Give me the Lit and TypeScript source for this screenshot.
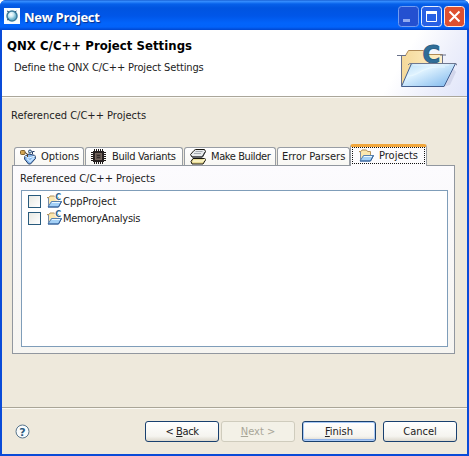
import { LitElement, html, css, svg } from "lit";
import { customElement, property } from "lit/decorators.js";

const projectFolder = (letter: boolean) => svg`
  <path d="M2.500 12V4l-1.500-.5h2l1-1.500h4.500l1 1.500h3V8" fill="#fbe7ae" stroke="#b3935c"/>
  <path d="M2.500 4v8.500" stroke="#7a8da8" fill="none"/>
  <path d="M5.500 7.500h10L12.500 13h-10.500z" fill="#a3d0f6" stroke="#5680b0"/>
  <path d="M6 8.500h8" stroke="#eaf7ff"/>
  <path d="M2 13h10.500l3-5.500" stroke="#2f5c98" fill="none"/>
  ${letter ? svg`<text x="9.200" y="6" class="letter">C</text>` : ""}`;

const icons: Record<string, unknown> = {
  options: svg`
    <path d="M5 7l4-2 6 1.500.5 3-5 5.500h-2L4.500 10z" fill="#86b7ee" stroke="#1f3b68"/>
    <path d="M7 9.500l3 3 4-4" stroke="#c9e6ff" stroke-width="1.500" fill="none"/>
    <path d="M5 7l4 2 6-2" stroke="#e3f3ff" fill="none"/>
    <rect x=".5" y="1.500" width="4.500" height="4" rx="1" fill="#d3a552" stroke="#80612c"/>
    <path d="M5 3.500l2.500 1.500v3" fill="none" stroke="#574024"/>
    <circle cx="10" cy="2.500" r="1.500" fill="#c4dcec" stroke="#2b4a70"/>
    <path d="M12.500 5V2.500h2" fill="none" stroke="#243c68"/>`,
  chip: svg`
    <path d="M3.500 0v15M5.500 0v15M7.500 0v15M9.500 0v15M11.500 0v15M0 3.500h15M0 5.500h15M0 7.500h15M0 9.500h15M0 11.500h15" stroke="#201a18"/>
    <rect x="2" y="2" width="11" height="11" fill="#282221"/>
    <rect x="4.500" y="4.500" width="6" height="6" fill="#5b504b" stroke="#75655c"/>
    <path d="M6 6.500h3M6 8.500h3" stroke="#332b2b"/>`,
  make: svg`
    <path d="M1 12.500L3 9.500h12l.5 1.500L13 15H2z" fill="#e9dc96" stroke="#17150e"/>
    <path d="M3 12h9.500L15 10" fill="none" stroke="#fdf8cf" stroke-width="1.500"/>
    <path d="M.5 5.500L4 1.500l1.500-1h9l1 2-3 5.500H2z" fill="#e8eaeb" stroke="#17150e"/>
    <path d="M5.500 2.500h7M4 4.500h7" stroke="#a5abb0"/>
    <path d="M2 8h10l3-5" fill="none" stroke="#3d4348"/>`,
  folder: projectFolder(false),
  cfolder: projectFolder(true),
};

@customElement("xp-icon")
export class XpIcon extends LitElement {
  @property() name = "folder";
  static styles = css`
    :host { display: block; flex: none; width: 16px; height: 16px; }
    svg { display: block; overflow: visible; }
    .letter {
      font: bold 8px "DejaVu Sans", sans-serif; fill: #2f668f;
      stroke: #fff; stroke-width: 1.500px; paint-order: stroke;
    }
  `;
  render() {
    return html`<svg width="16" height="16" viewBox="0 0 16 16">${icons[this.name]}</svg>`;
  }
}

@customElement("app-root")
export class AppRoot extends LitElement {
  static styles = css`
    :host {
      display: block; width: 469px; height: 456px; overflow: hidden;
      font: 11px/14px "DejaVu Sans Condensed", "DejaVu Sans", sans-serif;
      color: #222; cursor: default;
    }
    * { box-sizing: border-box; }
    .window {
      display: flex; flex-direction: column; height: 456px;
      padding: 0 2px 2px; background: #0a4bd8; white-space: nowrap;
      border-radius: 6px 6px 0 0;
    }
    .title {
      display: flex; align-items: center; height: 30px; flex: none; margin: 0 -2px;
      padding: 3px 4px 0 4px; border-radius: 6px 6px 0 0;
      background: linear-gradient(#0c50c6 0, #3a90ff 1px, #2a83fa 2px, #0660ea 4px, #0054e0 8px, #0056e8 16px, #0264fb 23px, #0263fa 27px, #0046cf 30px);
    }
    .logo { display: block; width: 16px; height: 16px; margin-top: -1px; }
    .caption {
      flex: 1; margin-left: 4px; color: #fff; text-shadow: 1px 1px 1px #0a2f8a;
      font: bold 13px/18px "Open Sans", "Noto Sans", sans-serif; letter-spacing: -.3px;
    }
    .controls { display: flex; gap: 2px; }
    .controls svg { display: block; }
    .header {
      height: 67px; flex: none; display: flex; justify-content: space-between;
      border-bottom: 1px solid #aaa69a;
      background: linear-gradient(120deg, #fff 0, #fff 83%, #edeffb 92%, #e0e5fa 100%);
    }
    .heading { padding: 8px 0 0 5px; }
    h1 { margin: 0; font-size: 13px; line-height: 16px; letter-spacing: .04px; color: #000; }
    .sub { margin: 7px 0 0 7px; letter-spacing: -.13px; }
    .banner { margin: 8px 10px 0 0; display: block; }
    .mark { font: bold 24px "DejaVu Sans", sans-serif; fill: #2f6e99; stroke: #2a6188; }
    .body { flex: 1; background: #eee9dc; border-top: 1px solid #fbf9f3; padding: 11px 12px 0 10px; }
    .intro { margin-left: -1px; }
    .tabs { display: flex; align-items: flex-end; height: 21px; margin-top: 21px; padding-left: 2px; }
    .tab {
      display: flex; align-items: center; height: 18px; margin-right: 1px; padding: 1px 0 0 5px;
      border: 1px solid #989da4; border-bottom: 0; border-radius: 3px 3px 0 0;
      background: linear-gradient(#fff, #f8f7f3);
    }
    .tab xp-icon { margin-right: 5px; }
    .t1 { width: 70px; }
    .t2 { width: 98px; letter-spacing: -.33px; }
    .t3 { width: 92px; letter-spacing: -.4px; }
    .t4 { width: 73px; padding-left: 4px; margin-right: 0; }
    .t5 {
      width: 77px; height: 22px; margin-bottom: -1px; padding: 0 0 2px 7px; position: relative;
      border-top: 3px solid #f0a63c; background: #fcfbfd;
    }
    .t5::after { content: ""; position: absolute; inset: 0 1px 2px 1px; border: 1px dotted #111; }
    .panel {
      height: 189px; border: 1px solid #91979f; padding: 6px 6px 0 8px;
      background: linear-gradient(#fcfbfe, #f6f5f1);
    }
    .list { height: 157px; margin-top: 4px; border: 1px solid #7f9db9; background: #fff; padding: 2px 0 0 6px; }
    .item { display: flex; align-items: center; height: 17px; }
    .tight { letter-spacing: -.28px; }
    .check { width: 13px; height: 13px; border: 1px solid #285a7c; background: linear-gradient(135deg, #e9e9e3, #fff); margin-right: 5px; }
    .item xp-icon { margin-right: 1px; }
    .footer {
      display: flex; align-items: flex-start; height: 47px; flex: none; padding: 13px 10px 0 13px;
      background: #eee9dc; border-top: 1px solid #a9a597; box-shadow: inset 0 1px #fbf9f3;
    }
    .help { display: block; margin: 3px auto 0 0; }
    .question { font: bold 11px "DejaVu Sans", sans-serif; fill: #2c5b80; text-anchor: middle; }
    button {
      width: 74px; height: 21px; padding: 0; margin: 0; border: 1px solid #19406f; border-radius: 3px;
      font: inherit; color: inherit; background: linear-gradient(#fff, #f5f4ef 75%, #dcd8cd);
    }
    .back { letter-spacing: -.4px; }
    .next { margin: 0 7px 0 2px; color: #a8a698; border-color: #cfccbd; background: #f3f1e7; }
    .finish { margin-right: 7px; box-shadow: inset 0 0 0 1px #a9c9f5, inset 0 -2px #8db0e6; }
  `;

  render() {
    return html`
      <div class="window">
        <div class="title">
          <svg class="logo" viewBox="0 0 16 16">
            <defs><radialGradient id="orb" cx=".4" cy=".35"><stop stop-color="#fff"/><stop offset=".5" stop-color="#cbeaf3"/><stop offset="1" stop-color="#6fb3cc"/></radialGradient></defs>
            <path d="M0 0h16v16H0z" fill="#f8fcff"/>
            <circle cx="8" cy="8" r="5" fill="url(#orb)" stroke="#397c9c" stroke-width="1.500"/>
            <path d="M3 3l2 1M12.500 3l-1.500 1M3 12l2-1" stroke="#234e73"/>
          </svg>
          <span class="caption">New Project</span>
          <div class="controls">
            <svg width="21" height="21"><rect x=".5" y=".5" width="20" height="20" rx="3" fill="#2450d0" stroke="#739cf0"/><path d="M5 14.500h7" stroke="#91aaf0" stroke-width="3"/></svg>
            <svg width="21" height="21"><rect x=".5" y=".5" width="20" height="20" rx="3" fill="#2860e4" stroke="#e4edff"/><path d="M5.500 6v9.500h10V6" fill="none" stroke="#fff"/><path d="M5 6.500h11" stroke="#fff" stroke-width="3"/></svg>
            <svg width="21" height="21"><rect x=".5" y=".5" width="20" height="20" rx="3" fill="#de5030" stroke="#ffeae4"/><path d="M5.500 5.500l10 10m0-10l-10 10" stroke="#fff" stroke-width="2"/></svg>
          </div>
        </div>
        <div class="header">
          <div class="heading">
            <h1>QNX C/C++ Project Settings</h1>
            <div class="sub">Define the QNX C/C++ Project Settings</div>
          </div>
          <svg class="banner" width="64" height="54" viewBox="0 0 64 54">
            <defs>
              <linearGradient id="blue" x2="1" y2="1"><stop stop-color="#b5dcf7"/><stop offset=".35" stop-color="#e0f3ff"/><stop offset="1" stop-color="#78b4ec"/></linearGradient>
              <linearGradient id="tan" x2="1"><stop stop-color="#f5d99a"/><stop offset="1" stop-color="#fff0c8"/></linearGradient>
            </defs>
            <path d="M50 49l10-19 3 4-6 13z" fill="#c9cde4" opacity=".7"/>
            <path d="M8.500 47V17.500h4l3-5h15l3 4h16V30" fill="url(#tan)" stroke="#b08a55"/>
            <path d="M8.500 17v31M49.500 17v8M4 17.500h9M47 17h6" fill="none" stroke="#68708a"/>
            <text class="mark" x="29.500" y="24.500">C</text>
            <path d="M18.500 25.500h44L51 48.500H8.500z" fill="url(#blue)" stroke="#445f8e"/>
            <path d="M20 27h36M14 38C28 38 26 28 52 29" stroke="#edf9ff" fill="none" opacity=".7"/>
            <path d="M15 27q1-2 4-1.500h42q3-.5 3 2" fill="none" stroke="#6f7890"/>
          </svg>
        </div>
        <div class="body">
          <div class="intro">Referenced C/C++ Projects</div>
          <div class="tabs">
            <div class="tab t1"><xp-icon name="options"></xp-icon>Options</div>
            <div class="tab t2"><xp-icon name="chip"></xp-icon>Build Variants</div>
            <div class="tab t3"><xp-icon name="make"></xp-icon>Make Builder</div>
            <div class="tab t4">Error Parsers</div>
            <div class="tab t5"><xp-icon name="folder"></xp-icon>Projects</div>
          </div>
          <div class="panel">
            <div class="intro">Referenced C/C++ Projects</div>
            <div class="list">
              <div class="item"><span class="check"></span><xp-icon name="cfolder"></xp-icon>CppProject</div>
              <div class="item tight"><span class="check"></span><xp-icon name="cfolder"></xp-icon>MemoryAnalysis</div>
            </div>
          </div>
        </div>
        <div class="footer">
          <svg class="help" width="15" height="15" viewBox="0 0 15 15">
            <circle cx="7.500" cy="7.500" r="6.500" fill="#f8fbfc" stroke="#58758c"/>
            <text class="question" x="7.500" y="11.500">?</text>
          </svg>
          <button class="back">&lt; <u>B</u>ack</button>
          <button class="next" disabled><u>N</u>ext &gt;</button>
          <button class="finish"><u>F</u>inish</button>
          <button>Cancel</button>
        </div>
      </div>`;
  }
}
